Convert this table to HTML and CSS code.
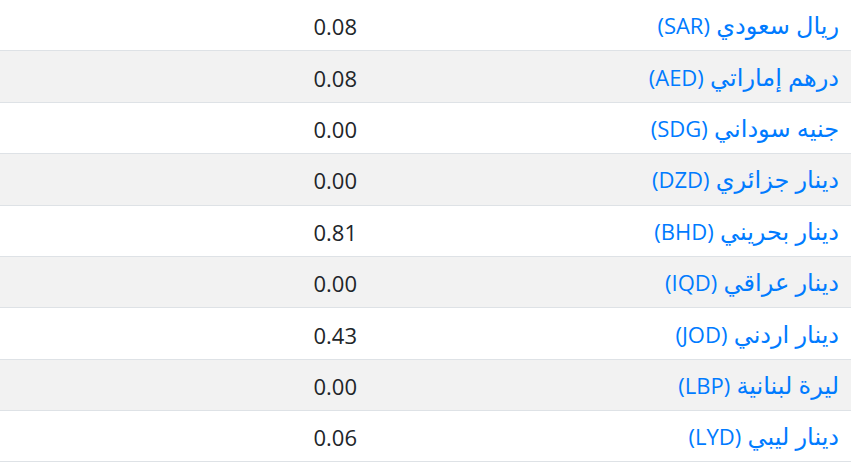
FILE: index.html
```html
<!DOCTYPE html>
<html lang="ar" dir="rtl">
<head>
<meta charset="utf-8">
<link rel="stylesheet" href="styles.css">
</head>
<body>
<table class="rates">
  <tbody>
    <tr><td class="name"><a href="#">ريال سعودي <span class="code">(SAR)</span></a></td><td class="val">0.08</td></tr>
    <tr><td class="name"><a href="#">درهم إماراتي <span class="code">(AED)</span></a></td><td class="val">0.08</td></tr>
    <tr><td class="name"><a href="#">جنيه سوداني <span class="code">(SDG)</span></a></td><td class="val">0.00</td></tr>
    <tr><td class="name"><a href="#">دينار جزائري <span class="code">(DZD)</span></a></td><td class="val">0.00</td></tr>
    <tr><td class="name"><a href="#">دينار بحريني <span class="code">(BHD)</span></a></td><td class="val">0.81</td></tr>
    <tr><td class="name"><a href="#">دينار عراقي <span class="code">(IQD)</span></a></td><td class="val">0.00</td></tr>
    <tr><td class="name"><a href="#">دينار اردني <span class="code">(JOD)</span></a></td><td class="val">0.43</td></tr>
    <tr><td class="name"><a href="#">ليرة لبنانية <span class="code">(LBP)</span></a></td><td class="val">0.00</td></tr>
    <tr><td class="name"><a href="#">دينار ليبي <span class="code">(LYD)</span></a></td><td class="val">0.06</td></tr>
  </tbody>
</table>
</body>
</html>
```
FILE: styles.css
```css
html, body {
  margin: 0;
  padding: 0;
  background: #fff;
}
body {
  font-family: "Open Sans", "Noto Sans", "DejaVu Sans", sans-serif;
  font-size: 22px;
  color: #212529;
  overflow: hidden;
}
.rates {
  width: 100%;
  border-collapse: collapse;
  table-layout: fixed;
  margin-top: -0.4px;
}
.rates tr {
  height: 51.375px;
}
.rates tr:nth-child(even) {
  background: #f2f2f2;
}
.rates td {
  border-bottom: 1px solid #dee2e6;
  padding: 0 12px;
  vertical-align: middle;
  text-align: right;
  line-height: 30px;
  white-space: nowrap;
}
.rates td.val {
  padding-top: 2px;
}
.rates td.name {
  width: 458px;
  font-size: 24px;
}
.rates td.name .code {
  font-size: 22px;
}
.rates a {
  color: #007bff;
  text-decoration: none;
}
```
